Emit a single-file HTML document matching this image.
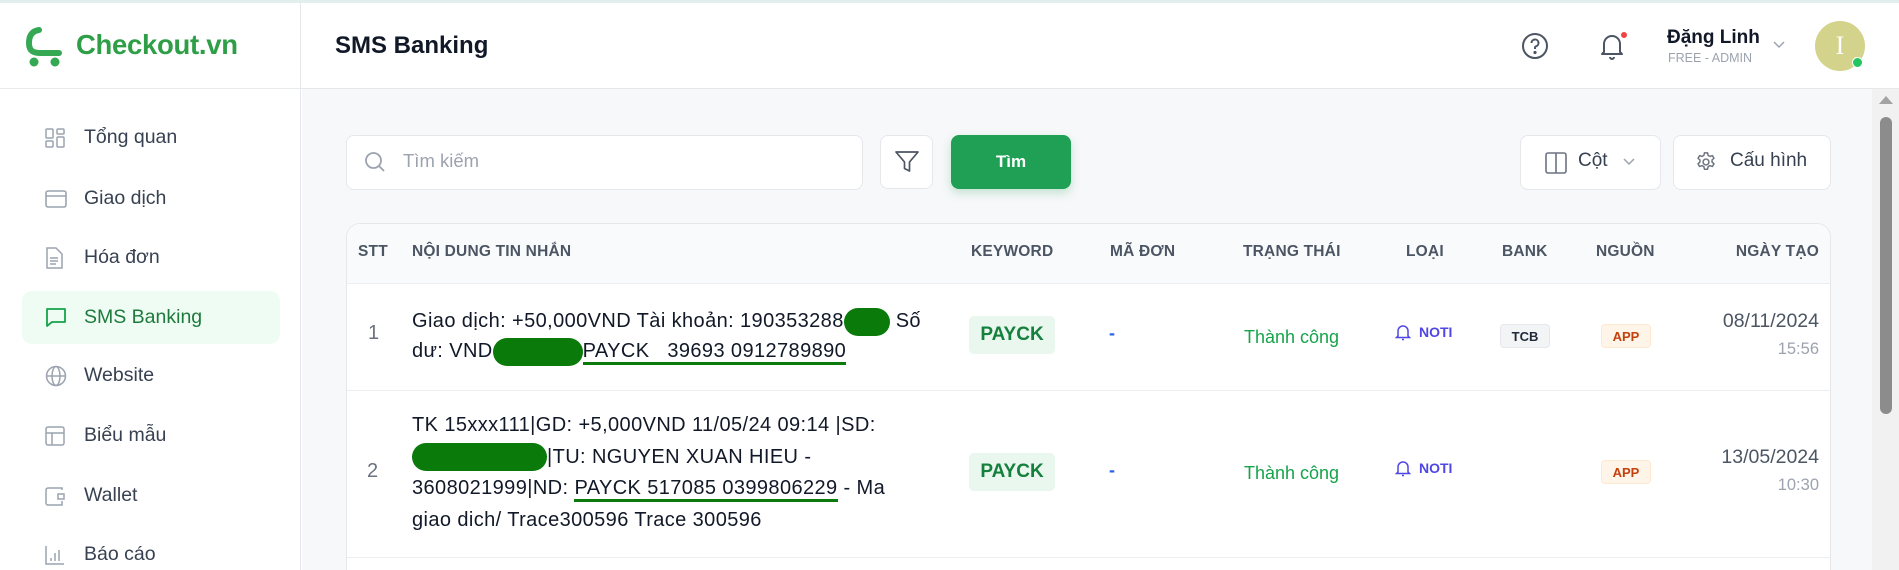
<!DOCTYPE html>
<html><head><meta charset="utf-8"><style>
*{box-sizing:border-box;margin:0;padding:0}
html,body{width:1899px;height:570px;overflow:hidden}
body{background:#fff;font-family:"Liberation Sans",sans-serif;position:relative;color:#1f2937}
.a{position:absolute}
.nav{position:absolute;left:22px;width:258px;height:53px;display:flex;align-items:center;font-size:19.5px;color:#374151}
.nav svg{position:absolute;left:23px}
.nav span{position:absolute;left:62px}
.th{position:absolute;top:243px;font-size:15.5px;font-weight:bold;color:#4b5563;white-space:nowrap;letter-spacing:0.2px}
.cell{position:absolute;font-size:20px;color:#111827;white-space:nowrap;letter-spacing:0.4px}
.red{display:inline-block;background:#0a7a0a;border-radius:14px;vertical-align:middle}
.ul{border-bottom:3px solid #0a7a0a;padding-bottom:0}
.pay{position:absolute;left:969px;width:86px;height:38px;background:#eaf7ee;border-radius:5px;color:#15803d;font-weight:bold;font-size:19px;display:flex;align-items:center;justify-content:center}
.dash{position:absolute;left:1109px;color:#2563eb;font-weight:bold;font-size:18px}
.ok{position:absolute;left:1244px;color:#16a34a;font-size:18px}
.noti{position:absolute;left:1395px;color:#4f46e5;font-weight:bold;font-size:14px;display:flex;align-items:center;gap:8px}
.badge{position:absolute;height:24px;border-radius:4px;font-size:13px;font-weight:bold;display:flex;align-items:center;justify-content:center}
.date{position:absolute;right:80px;text-align:right;font-size:19.5px;color:#4b5563;line-height:27px}
.date small{font-size:16.5px;color:#9ca3af}
</style></head><body>
<div class="a" style="left:0;top:0;width:1899px;height:3px;background:#e3efec"></div>
<!-- sidebar -->
<div class="a" style="left:0;top:3px;width:301px;height:567px;border-right:1px solid #e5e7eb;background:#fff"></div>
<div class="a" style="left:0;top:88px;width:301px;height:1px;background:#e8eaed"></div>
<svg class="a" style="left:25px;top:27px" width="38" height="42" viewBox="0 0 38 42"><path d="M14 3 C6 4 4 10 4 16 C4 24 8 26 16 26 L34 26" fill="none" stroke="#34a853" stroke-width="6" stroke-linecap="round"/><circle cx="9" cy="35" r="4.5" fill="#34a853"/><circle cx="30" cy="35" r="4.5" fill="#34a853"/></svg>
<div class="a" style="left:76px;top:29px;font-size:27.5px;font-weight:bold;color:#2e9e47;letter-spacing:-0.3px">Checkout.vn</div>
<div class="nav" style="top:111px"><svg width="20" height="20" viewBox="0 0 20 20" fill="none" stroke="#9ca3af" stroke-width="1.5"><rect x="1" y="1" width="7" height="9" rx="1"/><rect x="12" y="1" width="7" height="5" rx="1"/><rect x="1" y="13" width="7" height="6" rx="1"/><rect x="12" y="9" width="7" height="10" rx="1"/></svg><span>Tổng quan</span></div>
<div class="nav" style="top:172px"><svg width="22" height="18" viewBox="0 0 22 18" fill="none" stroke="#9ca3af" stroke-width="1.6"><rect x="1" y="1" width="20" height="16" rx="2"/><path d="M1 6h20"/></svg><span>Giao dịch</span></div>
<div class="nav" style="top:231px"><svg width="18" height="22" viewBox="0 0 18 22" fill="none" stroke="#9ca3af" stroke-width="1.5"><path d="M2 1h9l6 6v14H2z"/><path d="M5 11h8M5 14h8M5 17h6"/></svg><span>Hóa đơn</span></div>
<div class="nav" style="top:291px;background:#effcf3;border-radius:10px"><svg width="22" height="21" viewBox="0 0 22 21" fill="none" stroke="#16a34a" stroke-width="1.8"><path d="M2 2h18v13H7l-5 4z" stroke-linejoin="round"/></svg><span style="color:#1e7a3c">SMS Banking</span></div>
<div class="nav" style="top:349px"><svg width="22" height="22" viewBox="0 0 22 22" fill="none" stroke="#9ca3af" stroke-width="1.5"><circle cx="11" cy="11" r="9.5"/><ellipse cx="11" cy="11" rx="4" ry="9.5"/><path d="M1.5 11h19"/></svg><span>Website</span></div>
<div class="nav" style="top:409px"><svg width="20" height="20" viewBox="0 0 20 20" fill="none" stroke="#9ca3af" stroke-width="1.5"><rect x="1" y="1" width="18" height="18" rx="2"/><path d="M1 7h18M7 7v12"/></svg><span>Biểu mẫu</span></div>
<div class="nav" style="top:469px"><svg width="20" height="20" viewBox="0 0 20 20" fill="none" stroke="#9ca3af" stroke-width="1.5"><path d="M17 4V2H3a2 2 0 0 0-2 2v13a2 2 0 0 0 2 2h14v-4"/><path d="M13 8h6v5h-6z"/></svg><span>Wallet</span></div>
<div class="nav" style="top:528px"><svg width="20" height="20" viewBox="0 0 20 20" fill="none" stroke="#9ca3af" stroke-width="1.5"><path d="M1 1v18h18M6 16v-3M10 16V8M14 16V5"/></svg><span>Báo cáo</span></div>
<!-- header -->
<div class="a" style="left:301px;top:88px;width:1598px;height:1px;background:#e5e7eb"></div>
<div class="a" style="left:335px;top:32px;font-size:24px;font-weight:bold;color:#111827">SMS Banking</div>
<svg class="a" style="left:1521px;top:32px" width="28" height="28" viewBox="0 0 28 28" fill="none" stroke="#4b5563" stroke-width="2"><circle cx="14" cy="14" r="12"/><path d="M10.5 11a3.5 3.5 0 1 1 4.5 3.3c-.6.3-1 .8-1 1.5V17"/><circle cx="14" cy="20.5" r=".6" fill="#4b5563"/></svg>
<svg class="a" style="left:1598px;top:30px" width="30" height="32" viewBox="0 0 30 32" fill="none" stroke="#4b5563" stroke-width="2"><path d="M6 22V14a8 8 0 0 1 16 0v8l2 2H4z" stroke-linejoin="round"/><path d="M12 27a2 2 0 0 0 4 0"/><circle cx="26" cy="5" r="3" fill="#ef4444" stroke="none"/></svg>
<div class="a" style="left:1667px;top:27px;font-size:19px;font-weight:bold;color:#111827">Đặng Linh</div>
<div class="a" style="left:1668px;top:51px;font-size:12.5px;color:#9ca3af">FREE - ADMIN</div>
<svg class="a" style="left:1773px;top:41px" width="12" height="8" viewBox="0 0 12 8" fill="none" stroke="#9ca3af" stroke-width="1.5"><path d="M1 1l5 5 5-5"/></svg>
<div class="a" style="left:1815px;top:21px;width:50px;height:50px;border-radius:50%;background:#d3d38b;color:#fff;font-family:'Liberation Serif',serif;font-size:26px;display:flex;align-items:center;justify-content:center">I</div>
<div class="a" style="left:1852px;top:57px;width:11px;height:11px;border-radius:50%;background:#22c55e;border:1.5px solid #fff"></div>
<!-- main -->
<div class="a" style="left:302px;top:89px;width:1570px;height:481px;background:#f7f8fa"></div>
<div class="a" style="left:1872px;top:89px;width:27px;height:481px;background:#f1f1f1"></div>
<div class="a" style="left:1879px;top:96px;width:0;height:0;border-left:7px solid transparent;border-right:7px solid transparent;border-bottom:8px solid #a3a3a3"></div>
<div class="a" style="left:1880px;top:117px;width:12px;height:297px;background:#8c8c8c;border-radius:6px"></div>
<div class="a" style="left:346px;top:135px;width:517px;height:55px;background:#fff;border:1px solid #e5e7eb;border-radius:8px"></div>
<svg class="a" style="left:364px;top:151px" width="22" height="22" viewBox="0 0 22 22" fill="none" stroke="#9ca3af" stroke-width="1.8"><circle cx="9.5" cy="9.5" r="7.5"/><path d="M15 15l5 5"/></svg>
<div class="a" style="left:403px;top:150px;font-size:18.5px;color:#9ca3af">Tìm kiếm</div>
<div class="a" style="left:880px;top:135px;width:53px;height:54px;background:#fff;border:1px solid #e5e7eb;border-radius:8px"></div>
<svg class="a" style="left:895px;top:151px" width="24" height="22" viewBox="0 0 24 22" fill="none" stroke="#4b5563" stroke-width="1.7"><path d="M1 1h22l-8.5 10v9l-5-2.5V11z" stroke-linejoin="round"/></svg>
<div class="a" style="left:951px;top:135px;width:120px;height:54px;background:#1fa055;border-radius:8px;color:#fff;font-weight:bold;font-size:17px;display:flex;align-items:center;justify-content:center;box-shadow:0 4px 10px rgba(31,160,85,.25)">Tìm</div>
<div class="a" style="left:1520px;top:135px;width:141px;height:55px;background:#fff;border:1px solid #e5e7eb;border-radius:8px"></div>
<svg class="a" style="left:1545px;top:152px" width="22" height="22" viewBox="0 0 22 22" fill="none" stroke="#6b7280" stroke-width="1.6"><rect x="1" y="1" width="20" height="20" rx="2"/><path d="M11 1v20"/></svg>
<div class="a" style="left:1578px;top:150px;font-size:19px;color:#374151">Cột</div>
<svg class="a" style="left:1623px;top:158px" width="12" height="8" viewBox="0 0 12 8" fill="none" stroke="#9ca3af" stroke-width="1.5"><path d="M1 1l5 5 5-5"/></svg>
<div class="a" style="left:1673px;top:135px;width:158px;height:55px;background:#fff;border:1px solid #e5e7eb;border-radius:8px"></div>
<svg class="a" style="left:1695px;top:151px" width="22" height="22" viewBox="0 0 24 24" fill="none" stroke="#6b7280" stroke-width="1.6"><path d="M10.3 2h3.4l.6 2.8 2 1.1 2.7-.9 1.7 2.9-2.1 1.9v2.3l2.1 1.9-1.7 2.9-2.7-.9-2 1.1-.6 2.8h-3.4l-.6-2.8-2-1.1-2.7.9-1.7-2.9 2.1-1.9v-2.3L3.3 7.9 5 5l2.7.9 2-1.1z" stroke-linejoin="round"/><circle cx="12" cy="12" r="3.2"/></svg>
<div class="a" style="left:1730px;top:150px;font-size:19px;color:#374151">Cấu hình</div>
<!-- table -->
<div class="a" style="left:346px;top:223px;width:1485px;height:347px;background:#fff;border:1px solid #e5e7eb;border-bottom:none;border-radius:14px 14px 0 0;overflow:hidden">
<div class="a" style="left:0;top:0;width:100%;height:60px;background:#f9fafb;border-bottom:1px solid #eceef1"></div>
<div class="a" style="left:0;top:166px;width:100%;height:1px;background:#eceef1"></div>
<div class="a" style="left:0;top:333px;width:100%;height:1px;background:#eceef1"></div>
</div>
<div class="th" style="left:358px">STT</div>
<div class="th" style="left:412px">NỘI DUNG TIN NHẮN</div>
<div class="th" style="left:971px">KEYWORD</div>
<div class="th" style="left:1110px">MÃ ĐƠN</div>
<div class="th" style="left:1243px">TRẠNG THÁI</div>
<div class="th" style="left:1406px">LOẠI</div>
<div class="th" style="left:1502px">BANK</div>
<div class="th" style="left:1596px">NGUỒN</div>
<div class="th" style="right:80px">NGÀY TẠO</div>
<!-- row1 -->
<div class="cell" style="left:368px;top:322px;color:#6b7280">1</div>
<div class="cell" style="left:412px;top:306px;line-height:30px">Giao dịch: +50,000VND Tài khoản: 190353288<span class="red" style="width:46px;height:28px"></span> Số<br>dư: VND<span class="red" style="width:90px;height:28px"></span><span class="ul">PAYCK &nbsp; 39693 0912789890</span></div>
<div class="pay" style="top:316px">PAYCK</div>
<div class="dash" style="top:323px">-</div>
<div class="ok" style="top:327px">Thành công</div>
<div class="noti" style="top:323px"><svg width="16" height="18" viewBox="0 0 16 18" fill="none" stroke="#4f46e5" stroke-width="1.5"><path d="M3 13V8a5 5 0 0 1 10 0v5l1.5 1.5h-13z"/><path d="M7 16.5h2"/></svg>NOTI</div>
<div class="badge" style="left:1500px;top:324px;width:50px;background:#f3f4f6;border:1px solid #e5e7eb;color:#1f2937">TCB</div>
<div class="badge" style="left:1601px;top:324px;width:50px;background:#fff4e8;border:1px solid #fde8d2;color:#c2410c">APP</div>
<div class="date" style="top:308px">08/11/2024<br><small>15:56</small></div>
<!-- row2 -->
<div class="cell" style="left:367px;top:460px;color:#6b7280">2</div>
<div class="cell" style="left:412px;top:410px;line-height:31.5px">TK 15xxx111|GD: +5,000VND 11/05/24 09:14 |SD:<br><span class="red" style="width:135px;height:28px"></span>|TU: NGUYEN XUAN HIEU -<br>3608021999|ND: <span class="ul">PAYCK 517085 0399806229</span> - Ma<br>giao dich/ Trace300596 Trace 300596</div>
<div class="pay" style="top:453px">PAYCK</div>
<div class="dash" style="top:460px">-</div>
<div class="ok" style="top:463px">Thành công</div>
<div class="noti" style="top:459px"><svg width="16" height="18" viewBox="0 0 16 18" fill="none" stroke="#4f46e5" stroke-width="1.5"><path d="M3 13V8a5 5 0 0 1 10 0v5l1.5 1.5h-13z"/><path d="M7 16.5h2"/></svg>NOTI</div>
<div class="badge" style="left:1601px;top:460px;width:50px;background:#fff4e8;border:1px solid #fde8d2;color:#c2410c">APP</div>
<div class="date" style="top:444px">13/05/2024<br><small>10:30</small></div>
</body></html>
